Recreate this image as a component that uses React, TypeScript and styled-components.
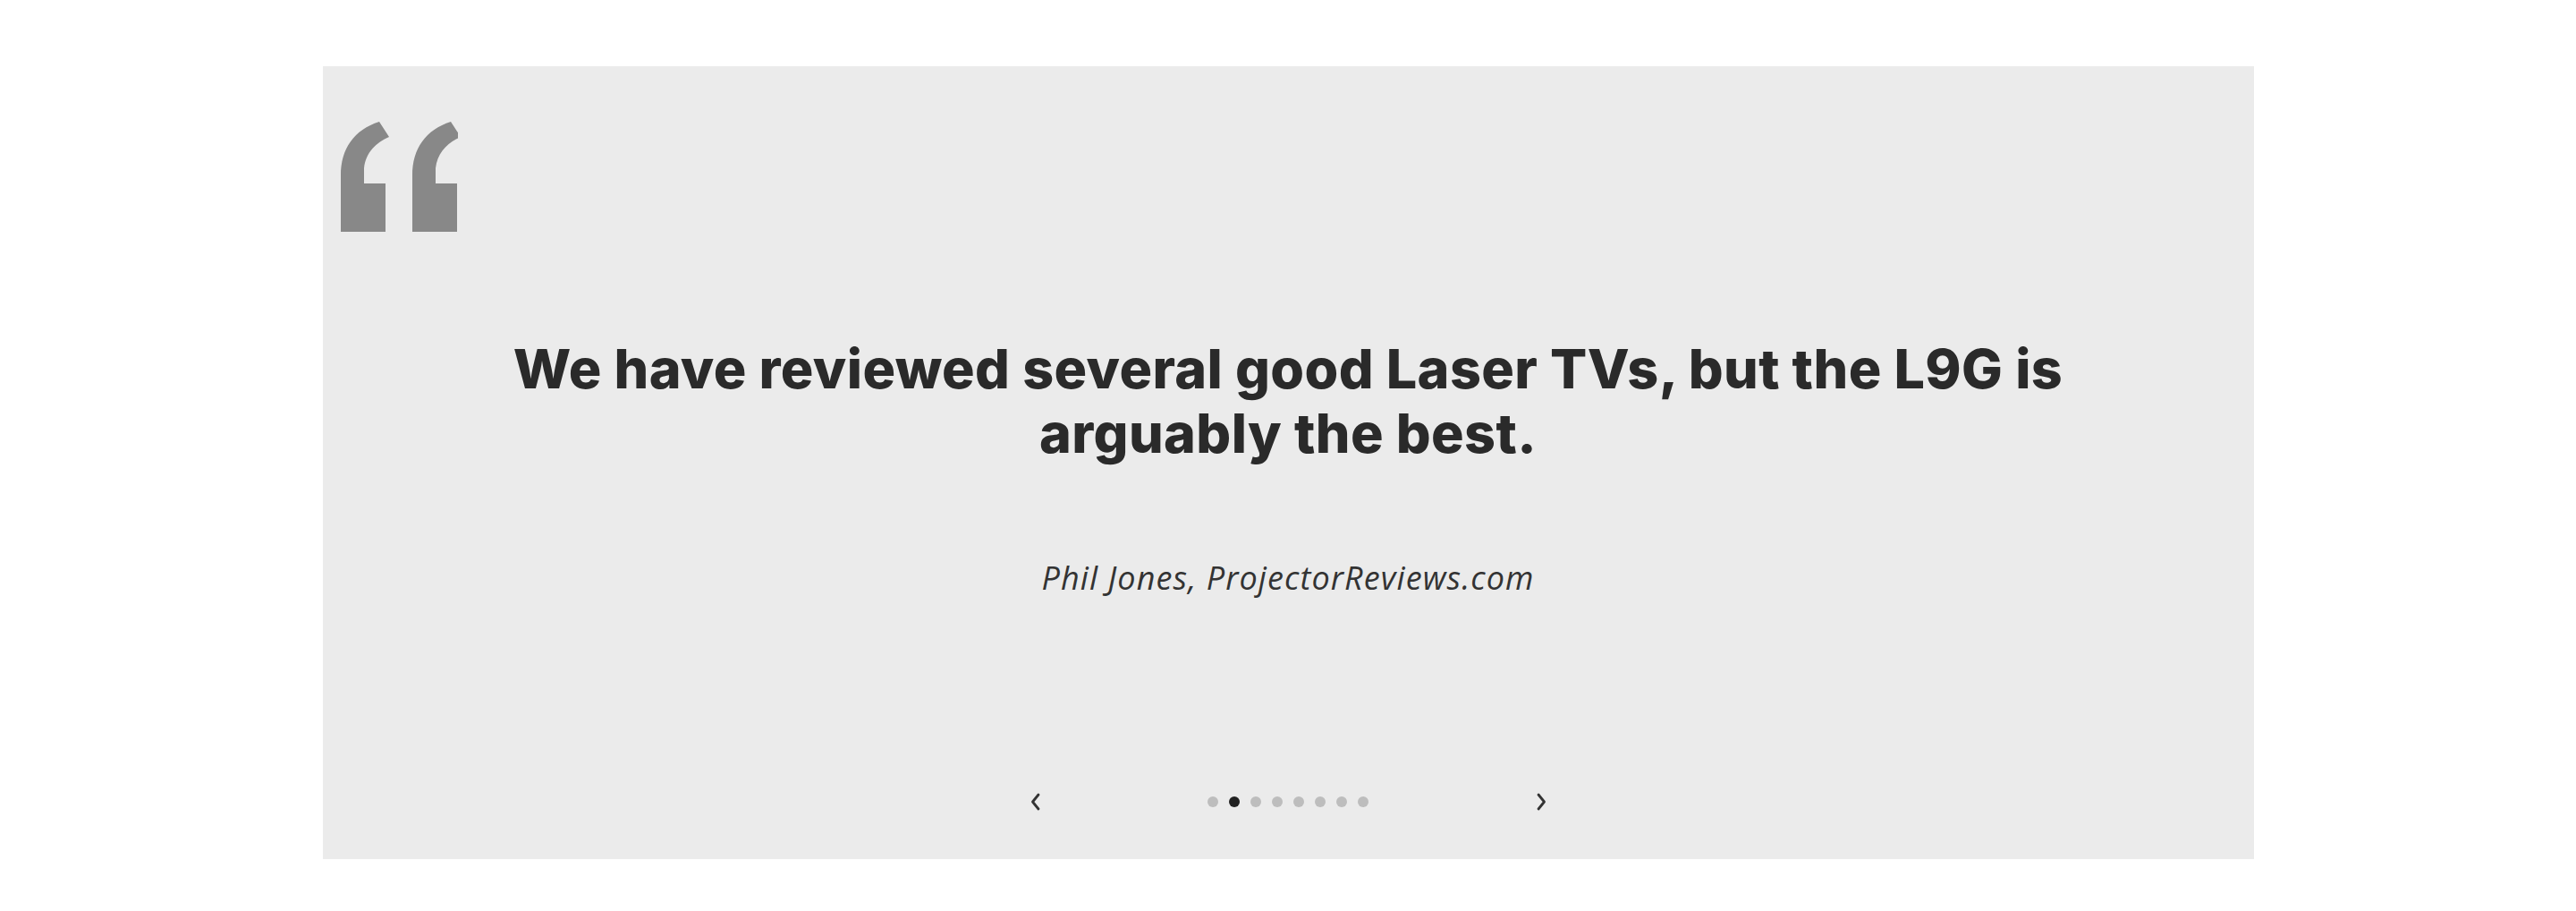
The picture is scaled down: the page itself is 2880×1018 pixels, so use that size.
import React from "react";
import styled, { createGlobalStyle } from "styled-components";

const GlobalStyle = createGlobalStyle`
  html, body {
    margin: 0;
    padding: 0;
    background: #ffffff;
  }
  body {
    font-family: "Inter", "Liberation Sans", sans-serif;
  }
`;

const Page = styled.div`
  width: 2880px;
  padding-top: 74px;
  box-sizing: border-box;
  display: flex;
  justify-content: center;
`;

const Panel = styled.section`
  width: 2159px;
  height: 886px;
  background: #ebebeb;
  box-sizing: border-box;
  padding: 62px 20px 0;
  display: flex;
  flex-direction: column;
`;

const QuoteMark = styled.svg`
  display: block;
  width: 131px;
  height: 123px;
  flex: none;
`;

const Heading = styled.h2`
  margin: 117px auto 0;
  max-width: 1820px;
  font-family: "Inter", "Liberation Sans", sans-serif;
  font-weight: 800;
  font-size: 61px;
  line-height: 72px;
  color: #2a2a2a;
  text-align: center;
  letter-spacing: 0.4px;
`;

const Attribution = styled.p`
  margin: 102px 0 0;
  font-family: "Open Sans", "Liberation Sans", sans-serif;
  font-style: italic;
  font-weight: 400;
  font-size: 36px;
  line-height: 48px;
  letter-spacing: 1.1px;
  color: #333333;
  text-align: center;
`;

const Nav = styled.div`
  margin-top: 211px;
  display: flex;
  justify-content: center;
  align-items: center;
`;

const ArrowButton = styled.button`
  width: 30px;
  height: 30px;
  padding: 0;
  border: none;
  background: transparent;
  display: flex;
  align-items: center;
  justify-content: center;
  color: #333333;
  cursor: pointer;
`;

const Dots = styled.div`
  width: 536px;
  display: flex;
  justify-content: center;
  align-items: center;
  gap: 12px;
`;

const Dot = styled.span<{ $active?: boolean }>`
  width: 12px;
  height: 12px;
  border-radius: 50%;
  background: ${(p) => (p.$active ? "#222222" : "#bdbdbd")};
`;

const Chevron = ({ dir }: { dir: "left" | "right" }) => (
  <svg width="13" height="22" viewBox="0 0 13 22" fill="none">
    <path
      d={dir === "left" ? "M10 3 L3.5 11 L10 19" : "M3 3 L9.5 11 L3 19"}
      stroke="currentColor"
      strokeWidth="2.8"
      strokeLinecap="round"
      strokeLinejoin="round"
    />
  </svg>
);

const markPath =
  "M0 123 L0 60 C0 30 15 9 43 0 L54 17 C40 23 28 34 26 52 L26 69 L50 69 L50 123 Z";

export default function App() {
  return (
    <>
      <GlobalStyle />
      <Page>
        <Panel>
          <QuoteMark viewBox="0 0 131 123" aria-hidden="true">
            <path d={markPath} fill="#888888" />
            <path d={markPath} fill="#888888" transform="translate(80 0)" />
          </QuoteMark>
          <Heading>
            We have reviewed several good Laser TVs, but the L9G is arguably
            the best.
          </Heading>
          <Attribution>Phil Jones, ProjectorReviews.com</Attribution>
          <Nav>
            <ArrowButton aria-label="Previous">
              <Chevron dir="left" />
            </ArrowButton>
            <Dots>
              {Array.from({ length: 8 }).map((_, i) => (
                <Dot key={i} $active={i === 1} />
              ))}
            </Dots>
            <ArrowButton aria-label="Next">
              <Chevron dir="right" />
            </ArrowButton>
          </Nav>
        </Panel>
      </Page>
    </>
  );
}
